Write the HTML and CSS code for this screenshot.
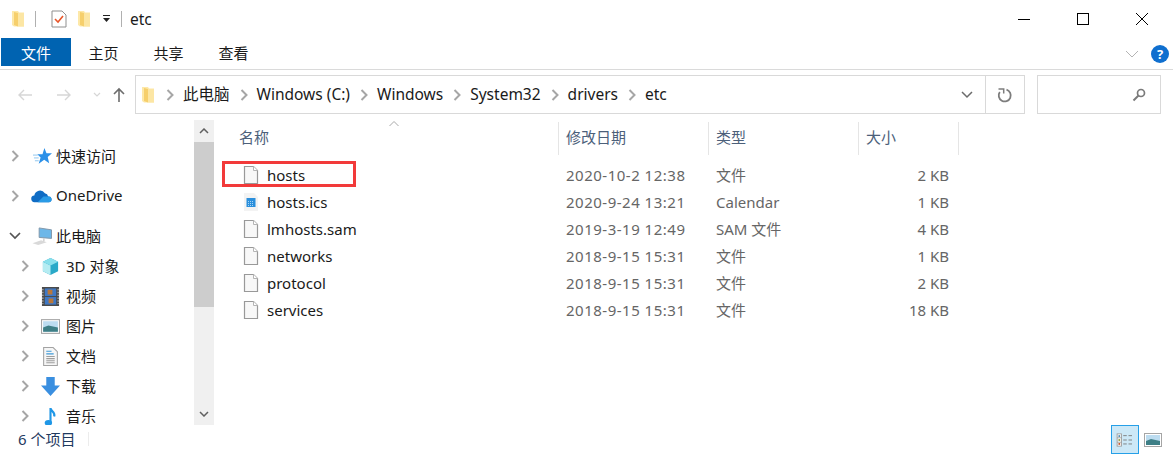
FILE: index.html
```html
<!DOCTYPE html>
<html lang="zh-CN">
<head>
    <meta charset="UTF-8">
    <meta name="viewport" content="width=device-width, initial-scale=1.0">
    <title>etc</title>
    <link rel="stylesheet" href="styles.css">
</head>
<body>
    <svg class="defs" width="0" height="0">
        <symbol id="folder" viewBox="0 0 14 18">
            <path d="M1 1h6l1 1.500h5v14H3l-2-1.500z" fill="#fde8a8"/>
            <path d="M3 2l4 1v13.500L3 15z" fill="#f6cf6c"/>
            <path d="M7 3h6v13.500H7z" fill="#fce6a4"/>
        </symbol>
        <symbol id="doc" viewBox="0 0 16 20">
            <path d="M1.500 1.500h9l4 4v13h-13z" fill="#f8f8f8" stroke="#999" stroke-width="1.200"/>
            <path d="M10.500 1.500v4h4" fill="#fff" stroke="#b5b5b5"/>
        </symbol>
        <symbol id="chev-r" viewBox="0 0 10 14">
            <path d="M2.500 2l5 5-5 5" fill="none" stroke="#a6a6a6" stroke-width="2"/>
        </symbol>
    </svg>

    <div class="titlebar">
        <svg class="ico-folder"><use href="#folder"/></svg>
        <span class="tsep"></span>
        <svg class="qa-check" viewBox="0 0 16 18">
            <path d="M1 1h10l4 4v12H1z" fill="#fff" stroke="#8f8f8f"/>
            <path d="M4 9l3 3 5-6" fill="none" stroke="#e8562a" stroke-width="1.600"/>
        </svg>
        <svg class="ico-folder"><use href="#folder"/></svg>
        <svg class="qa-drop" viewBox="0 0 9 8">
            <path d="M1 0h7v1H1zM1 3h7L4.500 7z" fill="#222"/>
        </svg>
        <span class="tsep tsep-b"></span>
        <span class="title">etc</span>
        <div class="winbtns">
            <svg viewBox="0 0 14 14"><path d="M1 7.500h12" stroke="#000"/></svg>
            <svg viewBox="0 0 14 14"><rect x="1.500" y="1.500" width="11" height="11" fill="none" stroke="#000"/></svg>
            <svg viewBox="0 0 14 14"><path d="M1 1l12 12M13 1L1 13" stroke="#000"/></svg>
        </div>
    </div>

    <div class="ribbon">
        <span class="tab tab-file">文件</span>
        <span class="tab">主页</span>
        <span class="tab">共享</span>
        <span class="tab">查看</span>
        <div class="ribbon-right">
            <svg class="rib-chev" viewBox="0 0 14 8"><path d="M1 1l6 6 6-6" fill="none" stroke="#b4b4b4"/></svg>
            <span class="help">?</span>
        </div>
    </div>

    <div class="navrow">
        <div class="navbtns">
            <svg class="nav-arrow" viewBox="0 0 16 12"><path d="M15 6H2M7 1L2 6l5 5" fill="none" stroke="#d6d6d6" stroke-width="1.400"/></svg>
            <svg class="nav-arrow" viewBox="0 0 16 12"><path d="M1 6h13M9 1l5 5-5 5" fill="none" stroke="#d6d6d6" stroke-width="1.400"/></svg>
            <svg class="nav-down" viewBox="0 0 8 6"><path d="M1 1l3 3 3-3" fill="none" stroke="#d6d6d6" stroke-width="1.200"/></svg>
            <svg class="nav-up" viewBox="0 0 12 16"><path d="M6 15V2M1 7l5-5 5 5" fill="none" stroke="#6d6d6d" stroke-width="1.600"/></svg>
        </div>
        <div class="addr">
            <svg class="ico-folder"><use href="#folder"/></svg>
            <div class="crumbs">
                <svg class="crumb-sep"><use href="#chev-r"/></svg><span>此电脑</span>
                <svg class="crumb-sep"><use href="#chev-r"/></svg><span>Windows (C:)</span>
                <svg class="crumb-sep"><use href="#chev-r"/></svg><span>Windows</span>
                <svg class="crumb-sep"><use href="#chev-r"/></svg><span>System32</span>
                <svg class="crumb-sep"><use href="#chev-r"/></svg><span>drivers</span>
                <svg class="crumb-sep"><use href="#chev-r"/></svg><span>etc</span>
            </div>
            <svg class="addr-drop" viewBox="0 0 12 8"><path d="M1 1l5 5 5-5" fill="none" stroke="#6b6b6b" stroke-width="1.500"/></svg>
            <div class="refresh">
                <svg viewBox="0 0 16 16"><path d="M9.500 2.700A6 6 0 1 1 2.800 5" fill="none" stroke="#7d7d7d" stroke-width="1.800"/><path d="M1.500 2h5.200v4.500" fill="none" stroke="#7d7d7d" stroke-width="1.500"/></svg>
            </div>
        </div>
        <div class="search">
            <svg viewBox="0 0 14 14"><circle cx="9" cy="5" r="3.500" fill="none" stroke="#7a7a7a" stroke-width="1.700"/><path d="M6.500 7.500L1.500 12.500" stroke="#7a7a7a" stroke-width="2"/></svg>
        </div>
    </div>

    <div class="main">
        <nav class="sidebar">
            <div class="tree-item top">
                <svg class="twist"><use href="#chev-r"/></svg>
                <svg class="tree-ico ico-star" viewBox="0 0 20 20"><path d="M12 1l2.200 5.500H20l-4.500 4 1.500 6.500-5.200-3.500L6 17.500l2-6.500-3.500-3.500H10z" fill="#2b90e8"/><path d="M0 8.500h5M1 11.500h5M2 14.500h4" stroke="#8cc4ee"/></svg>
                <span>快速访问</span>
            </div>
            <div class="tree-item top">
                <svg class="twist"><use href="#chev-r"/></svg>
                <svg class="tree-ico ico-cloud" viewBox="0 0 22 14"><path d="M4 13.500a3.500 3.500 0 0 1-.5-7A6 6 0 0 1 14.500 4 4.500 4.500 0 0 1 18 7.500a3 3 0 0 1 1 6z" fill="#0f6cc4"/><path d="M7 13.500l6-6 5 0a3 3 0 0 1 1 6z" fill="#2a9be6"/></svg>
                <span>OneDrive</span>
            </div>
            <div class="tree-item top">
                <svg class="twist twist-open" viewBox="0 0 12 8"><path d="M1 1l5 5 5-5" fill="none" stroke="#555" stroke-width="1.700"/></svg>
                <svg class="tree-ico ico-pc" viewBox="0 0 22 20"><path d="M8 1l13 2v9L8 11z" fill="#6db7e8" stroke="#8296a8"/><path d="M1 17l9-3 6 2-9 3z" fill="#d9d9d9"/><path d="M13 12v3" stroke="#b5b5b5"/></svg>
                <span>此电脑</span>
            </div>
            <div class="tree-item sub">
                <svg class="twist"><use href="#chev-r"/></svg>
                <svg class="tree-ico" viewBox="0 0 20 20"><path d="M10 1l8 4v10l-8 4-8-4V5z" fill="#2aa9c8"/><path d="M2 5l8 4v10l-8-4z" fill="#b5ecf2"/><path d="M2 5l8-4 8 4-8 4z" fill="#8ae0ec"/></svg>
                <span>3D 对象</span>
            </div>
            <div class="tree-item sub">
                <svg class="twist"><use href="#chev-r"/></svg>
                <svg class="tree-ico" viewBox="0 0 18 20"><rect width="18" height="20" fill="#4a4a4a"/><rect x="3" y="1.500" width="12" height="8" fill="#3f78c4"/><rect x="3" y="10.500" width="12" height="8" fill="#3f78c4"/><path d="M6 3h5v5H6zM7 12h5v5H7z" fill="#b9773a"/><path d="M1 2v16M17 2v16" stroke="#ddd" stroke-dasharray="1.500 1.500"/></svg>
                <span>视频</span>
            </div>
            <div class="tree-item sub">
                <svg class="twist"><use href="#chev-r"/></svg>
                <svg class="tree-ico" viewBox="0 0 18 14"><rect x=".5" y=".5" width="17" height="13" fill="#fff" stroke="#a5a5a5"/><rect x="2" y="2" width="14" height="10" fill="#bcdcf0"/><path d="M2 8l5-2 9 2v4H2z" fill="#3e7f86"/></svg>
                <span>图片</span>
            </div>
            <div class="tree-item sub">
                <svg class="twist"><use href="#chev-r"/></svg>
                <svg class="tree-ico" viewBox="0 0 16 18"><path d="M1.500 .5h9l4 4v13h-13z" fill="#f6f6f6" stroke="#a3a3a3"/><path d="M4 4h5M4 6.500h7" stroke="#3f9ad8"/><path d="M4 9h8M4 11h8M4 13h8M4 15h8" stroke="#9d9d9d"/></svg>
                <span>文档</span>
            </div>
            <div class="tree-item sub">
                <svg class="twist"><use href="#chev-r"/></svg>
                <svg class="tree-ico" viewBox="0 0 18 18"><path d="M5 0h8v8h5l-9 10L0 8h5z" fill="#3a8fe0"/></svg>
                <span>下载</span>
            </div>
            <div class="tree-item sub">
                <svg class="twist"><use href="#chev-r"/></svg>
                <svg class="tree-ico" viewBox="0 0 18 18"><ellipse cx="7" cy="15" rx="3.500" ry="2.800" fill="#1f97e6"/><path d="M9 15V1c0 3 5 4 3.500 8" fill="none" stroke="#1f97e6" stroke-width="2"/></svg>
                <span>音乐</span>
            </div>
        </nav>

        <div class="scrollbar">
            <div class="sb-btn"><svg viewBox="0 0 10 6"><path d="M1 5l4-4 4 4" fill="none" stroke="#606060" stroke-width="1.500"/></svg></div>
            <div class="sb-thumb"></div>
            <div class="sb-track"></div>
            <div class="sb-btn"><svg viewBox="0 0 10 6"><path d="M1 1l4 4 4-4" fill="none" stroke="#606060" stroke-width="1.500"/></svg></div>
        </div>

        <div class="list">
            <div class="head">
                <span class="col-name">名称<svg class="sort" viewBox="0 0 10 6"><path d="M.5 5L5 .5 9.500 5" fill="none" stroke="#a8a8a8"/></svg></span>
                <span class="col">修改日期</span>
                <span class="col">类型</span>
                <span class="col col-last">大小</span>
            </div>
            <div class="rows">
                <div class="row">
                    <span class="name"><svg class="file-ico"><use href="#doc"/></svg>hosts</span>
                    <span class="cell date">2020-10-2 12:38</span><span class="cell">文件</span><span class="cell size">2 KB</span>
                    <div class="redbox"></div>
                </div>
                <div class="row">
                    <span class="name">
                        <svg class="file-ico" viewBox="0 0 16 20"><path d="M1 1h10l4 4v14H1z" fill="#f3f3f3"/><rect x="3.500" y="6" width="9" height="9" fill="#2b8fdc"/><path d="M5 9.500h6M5 11.500h6M5 13.500h6" stroke="#a5d4f5" stroke-dasharray="1 1"/></svg>hosts.ics</span>
                    <span class="cell date">2020-9-24 13:21</span><span class="cell">Calendar</span><span class="cell size">1 KB</span>
                </div>
                <div class="row">
                    <span class="name"><svg class="file-ico"><use href="#doc"/></svg>lmhosts.sam</span>
                    <span class="cell date">2019-3-19 12:49</span><span class="cell">SAM 文件</span><span class="cell size">4 KB</span>
                </div>
                <div class="row">
                    <span class="name"><svg class="file-ico"><use href="#doc"/></svg>networks</span>
                    <span class="cell date">2018-9-15 15:31</span><span class="cell">文件</span><span class="cell size">1 KB</span>
                </div>
                <div class="row">
                    <span class="name"><svg class="file-ico"><use href="#doc"/></svg>protocol</span>
                    <span class="cell date">2018-9-15 15:31</span><span class="cell">文件</span><span class="cell size">2 KB</span>
                </div>
                <div class="row">
                    <span class="name"><svg class="file-ico"><use href="#doc"/></svg>services</span>
                    <span class="cell date">2018-9-15 15:31</span><span class="cell">文件</span><span class="cell size">18 KB</span>
                </div>
            </div>
        </div>
    </div>

    <div class="statusbar">
        <span class="count">6 个项目</span>
        <span class="status-sep"></span>
        <div class="views">
            <div class="view view-on">
                <svg viewBox="0 0 20 16"><rect x="1" y="1" width="5" height="14" fill="#fff" stroke="#9a9a9a"/><path d="M1 5.500h5M1 10.500h5" stroke="#9a9a9a"/><rect x="2.500" y="2.500" width="2" height="2" fill="#4a8ab0"/><rect x="2.500" y="7" width="2" height="2" fill="#8a9a3a"/><rect x="2.500" y="11.500" width="2" height="2" fill="#c0502a"/><path d="M8 3h4M14 3h4M8 8h4M14 8h4M8 12.500h4M14 12.500h4" stroke="#777"/></svg>
            </div>
            <div class="view">
                <svg viewBox="0 0 18 14"><rect x=".5" y=".5" width="17" height="13" fill="#fff" stroke="#a5a5a5"/><rect x="2" y="2" width="14" height="10" fill="#bcdcf0"/><path d="M2 8l5-2 9 2v4H2z" fill="#3e7f86"/></svg>
            </div>
        </div>
    </div>
</body>
</html>
```

FILE: styles.css
```css
* {
    box-sizing: border-box;
}

html, body {
    height: 100%;
}

body {
    margin: 0;
    width: 1173px;
    height: 455px;
    overflow: hidden;
    background: #fff;
    color: #1a1a1a;
    font-family: "Noto Sans", "Noto Sans CJK SC", sans-serif;
    font-size: 15px;
    display: flex;
    flex-direction: column;
}

svg {
    display: block;
    flex: none;
}

.defs {
    position: absolute;
}

.ico-folder {
    width: 14px;
    height: 18px;
}

/* title bar */
.titlebar {
    height: 38px;
    display: flex;
    align-items: center;
    padding-left: 11px;
}

.tsep {
    width: 1px;
    height: 16px;
    background: #b0b0b0;
    margin: 0 15px 0 10px;
}

.tsep-b {
    margin: 0 8px 0 10px;
}

.qa-check {
    width: 16px;
    height: 18px;
    margin-right: 10px;
}

.qa-drop {
    width: 9px;
    height: 8px;
    margin-left: 11px;
}

.title {
    font-size: 15.500px;
    line-height: 1;
    margin-top: 1px;
}

.winbtns {
    margin-left: auto;
    display: flex;
    gap: 45px;
    padding-right: 24px;
}

.winbtns svg {
    width: 14px;
    height: 14px;
}

/* ribbon tabs */
.ribbon {
    height: 32px;
    display: flex;
    align-items: flex-start;
    padding-left: 1px;
    border-bottom: 1px solid #dadada;
}

.tab {
    width: 65px;
    height: 28px;
    line-height: 30px;
    text-align: center;
}

.tab-file {
    width: 70px;
    background: #0063b1;
    color: #fff;
}

.ribbon-right {
    margin-left: auto;
    height: 28px;
    display: flex;
    align-items: center;
    gap: 12px;
    padding: 3px 4px 0 0;
}

.rib-chev {
    width: 14px;
    height: 8px;
}

.help {
    width: 18px;
    height: 18px;
    border-radius: 50%;
    background: #0f6fcf;
    color: #fff;
    font-size: 13px;
    font-weight: 700;
    line-height: 18px;
    text-align: center;
}

/* address row */
.navrow {
    height: 50px;
    padding-top: 5px;
    display: flex;
    align-items: flex-start;
}

.navbtns {
    width: 135px;
    height: 39px;
    display: flex;
    align-items: center;
    padding-left: 17px;
}

.nav-arrow {
    width: 16px;
    height: 12px;
    margin-right: 23px;
}

.nav-arrow + .nav-down {
    margin-left: -2px;
}

.nav-down {
    width: 8px;
    height: 6px;
    margin-right: 12px;
}

.nav-up {
    width: 12px;
    height: 16px;
}

.addr {
    width: 890px;
    height: 39px;
    border: 1px solid #d9d9d9;
    display: flex;
    align-items: center;
    padding-left: 5px;
}

.crumbs {
    display: flex;
    align-items: center;
    font-size: 15.500px;
    line-height: 20px;
    margin: -2px 0 0 4px;
}

.crumb-sep {
    width: 10px;
    height: 14px;
    margin: 2px 8px 0 6px;
}

.crumbs span + .crumb-sep {
    margin-left: 9px;
}

.addr-drop {
    width: 12px;
    height: 8px;
    margin-left: auto;
    margin-right: 12px;
}

.refresh {
    width: 39px;
    height: 100%;
    border-left: 1px solid #d9d9d9;
    display: flex;
    align-items: center;
    justify-content: center;
}

.refresh svg {
    width: 16px;
    height: 16px;
}

.search {
    width: 124px;
    height: 39px;
    margin-left: 12px;
    border: 1px solid #d9d9d9;
    display: flex;
    align-items: center;
    justify-content: flex-end;
    padding-right: 14px;
}

.search svg {
    width: 14px;
    height: 14px;
}

/* main area */
.main {
    height: 305px;
    display: flex;
}

.sidebar {
    width: 194px;
    padding-top: 16px;
    overflow: hidden;
}

.tree-item {
    height: 30px;
    display: flex;
    align-items: center;
}

.tree-item span {
    margin-top: -2px;
}

.tree-item.top {
    height: 40px;
    padding-left: 10px;
}

.tree-item.top + .tree-item.sub {
    margin-top: -5px;
}

.tree-item.sub {
    padding-left: 20px;
}

.twist {
    width: 10px;
    height: 14px;
}

.twist-open {
    width: 12px;
    height: 8px;
    margin-left: -1px;
}

.tree-ico {
    width: 19px;
    height: 19px;
    margin-left: 11px;
    margin-right: 6px;
}

.ico-star {
    margin-left: 13px;
    margin-right: 4px;
}

.ico-cloud {
    width: 21px;
    height: 14px;
    margin-left: 11px;
    margin-right: 4px;
}

.ico-pc {
    width: 22px;
    margin-left: 10px;
    margin-right: 3px;
}

.scrollbar {
    width: 20px;
    background: #f0f0f0;
    display: flex;
    flex-direction: column;
}

.sb-btn {
    height: 22px;
    display: flex;
    align-items: center;
    justify-content: center;
}

.sb-btn svg {
    width: 10px;
    height: 6px;
}

.sb-thumb {
    height: 165px;
    background: #cdcdcd;
}

.sb-track {
    flex: 1;
}

/* file list */
.list {
    flex: 1;
    padding-left: 8px;
}

.head {
    height: 33px;
    margin-top: 2px;
    display: flex;
    align-items: stretch;
    color: #4c607a;
}

.col-name {
    position: relative;
    width: 336px;
    padding-left: 17px;
    line-height: 31px;
}

.sort {
    position: absolute;
    left: 167px;
    top: -1px;
    width: 10px;
    height: 6px;
}

.col {
    width: 150px;
    padding-left: 7px;
    line-height: 31px;
    border-left: 1px solid #e5e5e5;
}

.col-last {
    width: 101px;
    border-right: 1px solid #e5e5e5;
}

.rows {
    padding-top: 6px;
}

.row {
    position: relative;
    height: 27px;
    display: flex;
    align-items: center;
}

.name {
    width: 336px;
    padding-left: 21px;
    display: flex;
    align-items: center;
}

.file-ico {
    width: 16px;
    height: 20px;
    margin-right: 8px;
}

.cell {
    width: 150px;
    padding-left: 8px;
    color: #666;
}

.cell.date {
    letter-spacing: 0.500px;
}

.cell.size {
    width: 101px;
    padding: 0 10px 0 0;
    text-align: right;
}

/* the red highlight sits over the first row */
.redbox {
    position: absolute;
    left: 0;
    top: 0;
    width: 134px;
    height: 26px;
    border: 3px solid #f23a3a;
}

/* status bar */
.statusbar {
    height: 30px;
    display: flex;
    align-items: flex-start;
    padding-left: 18px;
    color: #1f3a5f;
}

.count {
    width: 70px;
    line-height: 28px;
}

.status-sep {
    width: 1px;
    height: 14px;
    margin-top: 7px;
    background: #ececec;
}

.views {
    margin-left: auto;
    margin-right: 6px;
    display: flex;
    align-items: center;
    height: 29px;
}

.view {
    width: 28px;
    height: 29px;
    display: flex;
    align-items: center;
    justify-content: center;
}

.view svg {
    width: 18px;
    height: 14px;
}

.view-on {
    background: #cce8f7;
    border: 1px solid #26a0e8;
}
```
